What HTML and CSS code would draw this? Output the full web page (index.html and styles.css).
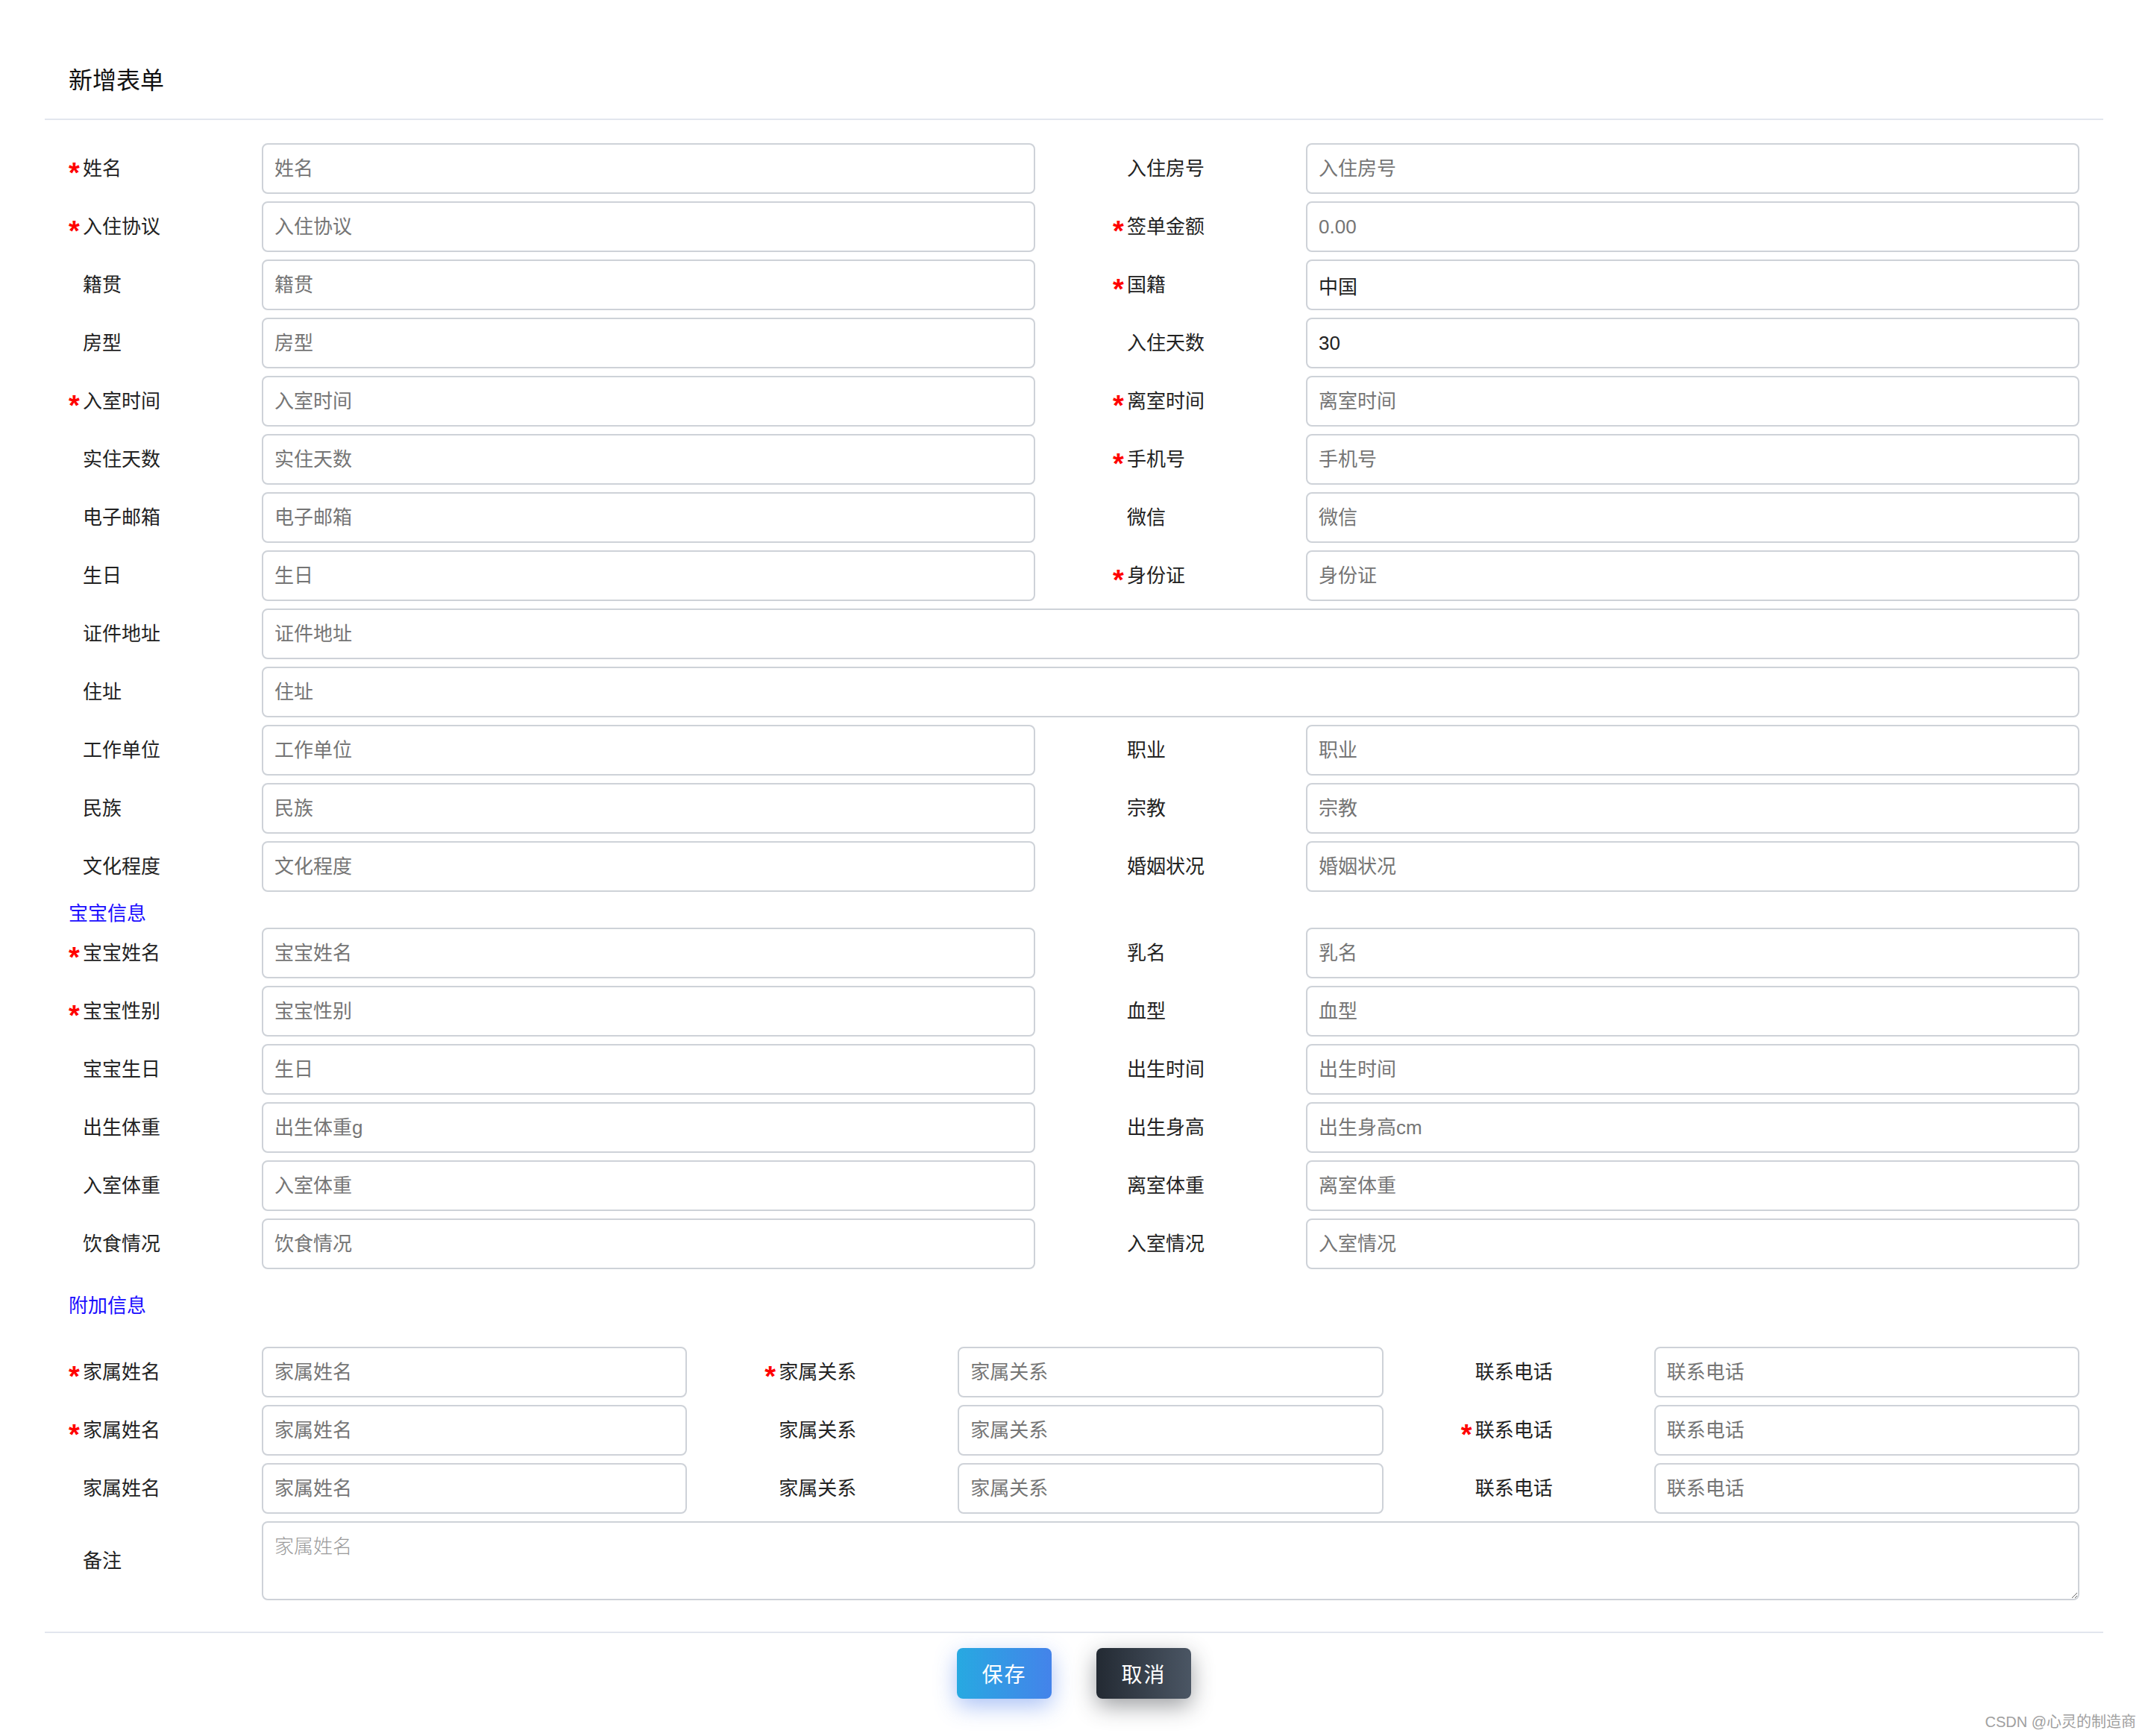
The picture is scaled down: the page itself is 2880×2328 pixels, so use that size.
FILE: index.html
```html
<!DOCTYPE html>
<html lang="zh-CN">
<head>
<meta charset="utf-8">
<title>新增表单</title>
<link rel="stylesheet" href="styles.css">
</head>
<body>
<div class="page">
  <div class="header"><span class="title">新增表单</span></div>
  <form class="form">
    <div class="row two">
      <div class="field"><label class="lbl"><span class="star">*</span>姓名</label><input class="inp" placeholder="姓名"></div>
      <div class="field"><label class="lbl"><span class="star"></span>入住房号</label><input class="inp" placeholder="入住房号"></div>
    </div>
    <div class="row two">
      <div class="field"><label class="lbl"><span class="star">*</span>入住协议</label><input class="inp" placeholder="入住协议"></div>
      <div class="field"><label class="lbl"><span class="star">*</span>签单金额</label><input class="inp" placeholder="0.00"></div>
    </div>
    <div class="row two">
      <div class="field"><label class="lbl"><span class="star"></span>籍贯</label><input class="inp" placeholder="籍贯"></div>
      <div class="field"><label class="lbl"><span class="star">*</span>国籍</label><input class="inp" value="中国"></div>
    </div>
    <div class="row two">
      <div class="field"><label class="lbl"><span class="star"></span>房型</label><input class="inp" placeholder="房型"></div>
      <div class="field"><label class="lbl"><span class="star"></span>入住天数</label><input class="inp" value="30"></div>
    </div>
    <div class="row two">
      <div class="field"><label class="lbl"><span class="star">*</span>入室时间</label><input class="inp" placeholder="入室时间"></div>
      <div class="field"><label class="lbl"><span class="star">*</span>离室时间</label><input class="inp" placeholder="离室时间"></div>
    </div>
    <div class="row two">
      <div class="field"><label class="lbl"><span class="star"></span>实住天数</label><input class="inp" placeholder="实住天数"></div>
      <div class="field"><label class="lbl"><span class="star">*</span>手机号</label><input class="inp" placeholder="手机号"></div>
    </div>
    <div class="row two">
      <div class="field"><label class="lbl"><span class="star"></span>电子邮箱</label><input class="inp" placeholder="电子邮箱"></div>
      <div class="field"><label class="lbl"><span class="star"></span>微信</label><input class="inp" placeholder="微信"></div>
    </div>
    <div class="row two">
      <div class="field"><label class="lbl"><span class="star"></span>生日</label><input class="inp" placeholder="生日"></div>
      <div class="field"><label class="lbl"><span class="star">*</span>身份证</label><input class="inp" placeholder="身份证"></div>
    </div>
    <div class="row one">
      <div class="field"><label class="lbl"><span class="star"></span>证件地址</label><input class="inp" placeholder="证件地址"></div>
    </div>
    <div class="row one">
      <div class="field"><label class="lbl"><span class="star"></span>住址</label><input class="inp" placeholder="住址"></div>
    </div>
    <div class="row two">
      <div class="field"><label class="lbl"><span class="star"></span>工作单位</label><input class="inp" placeholder="工作单位"></div>
      <div class="field"><label class="lbl"><span class="star"></span>职业</label><input class="inp" placeholder="职业"></div>
    </div>
    <div class="row two">
      <div class="field"><label class="lbl"><span class="star"></span>民族</label><input class="inp" placeholder="民族"></div>
      <div class="field"><label class="lbl"><span class="star"></span>宗教</label><input class="inp" placeholder="宗教"></div>
    </div>
    <div class="row two">
      <div class="field"><label class="lbl"><span class="star"></span>文化程度</label><input class="inp" placeholder="文化程度"></div>
      <div class="field"><label class="lbl"><span class="star"></span>婚姻状况</label><input class="inp" placeholder="婚姻状况"></div>
    </div>

    <div class="section section-baby">宝宝信息</div>
    <div class="row two">
      <div class="field"><label class="lbl"><span class="star">*</span>宝宝姓名</label><input class="inp" placeholder="宝宝姓名"></div>
      <div class="field"><label class="lbl"><span class="star"></span>乳名</label><input class="inp" placeholder="乳名"></div>
    </div>
    <div class="row two">
      <div class="field"><label class="lbl"><span class="star">*</span>宝宝性别</label><input class="inp" placeholder="宝宝性别"></div>
      <div class="field"><label class="lbl"><span class="star"></span>血型</label><input class="inp" placeholder="血型"></div>
    </div>
    <div class="row two">
      <div class="field"><label class="lbl"><span class="star"></span>宝宝生日</label><input class="inp" placeholder="生日"></div>
      <div class="field"><label class="lbl"><span class="star"></span>出生时间</label><input class="inp" placeholder="出生时间"></div>
    </div>
    <div class="row two">
      <div class="field"><label class="lbl"><span class="star"></span>出生体重</label><input class="inp" placeholder="出生体重g"></div>
      <div class="field"><label class="lbl"><span class="star"></span>出生身高</label><input class="inp" placeholder="出生身高cm"></div>
    </div>
    <div class="row two">
      <div class="field"><label class="lbl"><span class="star"></span>入室体重</label><input class="inp" placeholder="入室体重"></div>
      <div class="field"><label class="lbl"><span class="star"></span>离室体重</label><input class="inp" placeholder="离室体重"></div>
    </div>
    <div class="row two">
      <div class="field"><label class="lbl"><span class="star"></span>饮食情况</label><input class="inp" placeholder="饮食情况"></div>
      <div class="field"><label class="lbl"><span class="star"></span>入室情况</label><input class="inp" placeholder="入室情况"></div>
    </div>

    <div class="section section-extra">附加信息</div>
    <div class="row three">
      <div class="field"><label class="lbl"><span class="star">*</span>家属姓名</label><input class="inp" placeholder="家属姓名"></div>
      <div class="field"><label class="lbl"><span class="star">*</span>家属关系</label><input class="inp" placeholder="家属关系"></div>
      <div class="field"><label class="lbl"><span class="star"></span>联系电话</label><input class="inp" placeholder="联系电话"></div>
    </div>
    <div class="row three">
      <div class="field"><label class="lbl"><span class="star">*</span>家属姓名</label><input class="inp" placeholder="家属姓名"></div>
      <div class="field"><label class="lbl"><span class="star"></span>家属关系</label><input class="inp" placeholder="家属关系"></div>
      <div class="field"><label class="lbl"><span class="star">*</span>联系电话</label><input class="inp" placeholder="联系电话"></div>
    </div>
    <div class="row three">
      <div class="field"><label class="lbl"><span class="star"></span>家属姓名</label><input class="inp" placeholder="家属姓名"></div>
      <div class="field"><label class="lbl"><span class="star"></span>家属关系</label><input class="inp" placeholder="家属关系"></div>
      <div class="field"><label class="lbl"><span class="star"></span>联系电话</label><input class="inp" placeholder="联系电话"></div>
    </div>
    <div class="row one">
      <div class="field"><label class="lbl"><span class="star"></span>备注</label><textarea class="txt" placeholder="家属姓名"></textarea></div>
    </div>
  </form>
  <div class="footer">
    <button class="btn btn-save" type="button">保存</button>
    <button class="btn btn-cancel" type="button">取消</button>
  </div>
</div>
<div class="watermark">CSDN @心灵的制造商</div>
</body>
</html>
```

FILE: styles.css
```css
* { box-sizing: border-box; }
html, body {
  margin: 0;
  padding: 0;
  background: #ffffff;
}
body {
  font-family: "Liberation Sans", "Noto Sans CJK SC", sans-serif;
  color: #333333;
  position: relative;
  min-height: 2328px;
}
.page {
  padding: 0 60px;
}
.header {
  padding: 86px 32px 29px;
  border-bottom: 2px solid #e2e6ee;
}
.title {
  display: block;
  font-size: 32px;
  line-height: 44px;
  color: #111111;
}
.form {
  padding: 31px 32px 0;
  margin: 0;
}
.row {
  display: grid;
  column-gap: 104px;
  margin-bottom: 10px;
}
.row.two { grid-template-columns: 1fr 1fr; }
.row.three { grid-template-columns: 1fr 1fr 1fr; }
.row.one { grid-template-columns: 1fr; }
.field {
  display: grid;
  grid-template-columns: 259px 1fr;
  align-items: center;
  min-width: 0;
}
.lbl {
  font-size: 26px;
  line-height: 36px;
  color: #222222;
  white-space: nowrap;
}
.star {
  display: inline-block;
  width: 19px;
  color: #ff0000;
  font-family: "Liberation Sans", sans-serif;
  font-weight: bold;
  font-size: 38px;
  line-height: 20px;
  vertical-align: -10px;
}
.inp {
  display: block;
  width: 100%;
  height: 68px;
  margin: 0;
  padding: 0 15px;
  border: 2px solid #ced2d8;
  border-radius: 8px;
  background: #ffffff;
  font-family: "Liberation Sans", "Noto Sans CJK SC", sans-serif;
  font-size: 26px;
  color: #222222;
  outline: none;
}
.inp::placeholder { color: #757575; }
.txt {
  display: block;
  width: 100%;
  height: 106px;
  margin: 0;
  padding: 12px 15px;
  border: 2px solid #ced2d8;
  border-radius: 8px;
  background: #ffffff;
  font-family: "Noto Sans CJK SC", sans-serif;
  font-weight: 300;
  font-size: 26px;
  line-height: 36px;
  color: #222222;
  outline: none;
  resize: vertical;
}
.txt::placeholder { color: #9a9a9a; }
.section {
  font-size: 26px;
  color: #1a0dff;
}
.section-baby {
  line-height: 38px;
  height: 38px;
}
.section-extra {
  line-height: 38px;
  padding-top: 20px;
  margin-bottom: 36px;
}
.footer {
  margin-top: 42px;
  border-top: 2px solid #e2e6ee;
  padding-top: 20px;
  display: flex;
  justify-content: center;
  gap: 60px;
}
.btn {
  width: 127px;
  height: 68px;
  border: none;
  border-radius: 8px;
  color: #ffffff;
  font-family: "Noto Sans CJK SC", sans-serif;
  font-size: 28px;
  letter-spacing: 2px;
  padding: 0;
  cursor: pointer;
}
.btn-save {
  background: linear-gradient(90deg, #27a9e1 0%, #4483ea 100%);
  box-shadow: 0 10px 30px rgba(68, 120, 235, 0.45);
}
.btn-cancel {
  background: linear-gradient(90deg, #232a33 0%, #4b5664 100%);
  box-shadow: 0 10px 30px rgba(40, 44, 52, 0.45);
}
.watermark {
  position: absolute;
  right: 16px;
  bottom: 6px;
  font-size: 20px;
  line-height: 26px;
  color: #a0a0a0;
}
```
